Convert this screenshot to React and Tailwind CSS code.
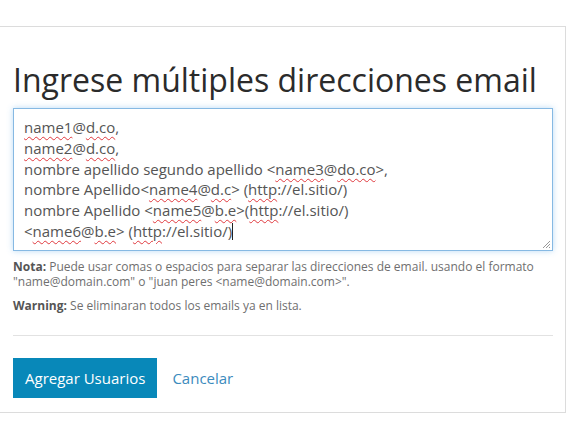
import React from 'react';

const W = ({ children }) => (
    <span className="underline decoration-wavy decoration-[#e0393e] decoration-1 underline-offset-[3px]">{children}</span>
);

export default function App() {
    return (
        <div className="min-h-[432px] bg-white pt-[26px] font-[family-name:'Open_Sans',sans-serif]">
            <div className="ml-[-1px] w-[567px] border border-[#dcdcdc] px-[13px] pt-[36px] pb-[14px]">
                {/* Heading */}
                <h1 className="text-[32px] leading-[34px] text-[#2b2b2b] mb-[11px]">Ingrese múltiples direcciones email</h1>

                {/* Textarea look-alike */}
                <div className="relative w-[540px] h-[143px] border border-[#86b9e3] shadow-[0_0_6px_rgba(102,175,233,0.45)] px-[10px] pt-[8px] text-[15px] leading-[20.8px] text-[#555]">
                    <div><W>name1</W>@<W>d.co</W>,</div>
                    <div><W>name2</W>@<W>d.co</W>,</div>
                    <div>nombre apellido segundo apellido &lt;<W>name3</W>@<W>do.co</W>&gt;,</div>
                    <div>nombre Apellido&lt;<W>name4</W>@<W>d.c</W>&gt; (<W>http</W>://el.sitio/)</div>
                    <div>nombre Apellido &lt;<W>name5</W>@<W>b.e</W>&gt;(<W>http</W>://el.sitio/)</div>
                    <div>&lt;<W>name6</W>@<W>b.e</W>&gt; (<W>http</W>://el.sitio/)<span className="inline-block w-px h-[17px] bg-[#222] align-[-3px]" /></div>
                    <svg className="absolute right-[1px] bottom-[1px]" width="9" height="9" viewBox="0 0 9 9">
                        <path d="M8 1 L1 8 M8 4 L4 8 M8 7 L7 8" stroke="#999" strokeWidth="1" fill="none" />
                    </svg>
                </div>

                {/* Help text */}
                <p className="mt-[8px] text-[12px] leading-[15px] text-[#6f6f6f]">
                    <b className="font-bold text-[#555]">Nota:</b> Puede usar comas o espacios para separar las direcciones de email. usando el formato "name@domain.com" o "juan peres &lt;name@domain.com&gt;".
                </p>
                <p className="mt-[9px] text-[12px] leading-[15px] text-[#6f6f6f]">
                    <b className="font-bold text-[#555]">Warning:</b> Se eliminaran todos los emails ya en lista.
                </p>

                <div className="mt-[22px] border-t border-[#e2e2e2] w-[540px]" />

                {/* Actions */}
                <div className="mt-[22px] flex items-center gap-[15px]">
                    <button className="h-[40px] px-[12px] bg-[#0888b9] text-white text-[15px]">Agregar Usuarios</button>
                    <a className="text-[15px] text-[#3b8bbd]">Cancelar</a>
                </div>
            </div>
        </div>
    );
}
